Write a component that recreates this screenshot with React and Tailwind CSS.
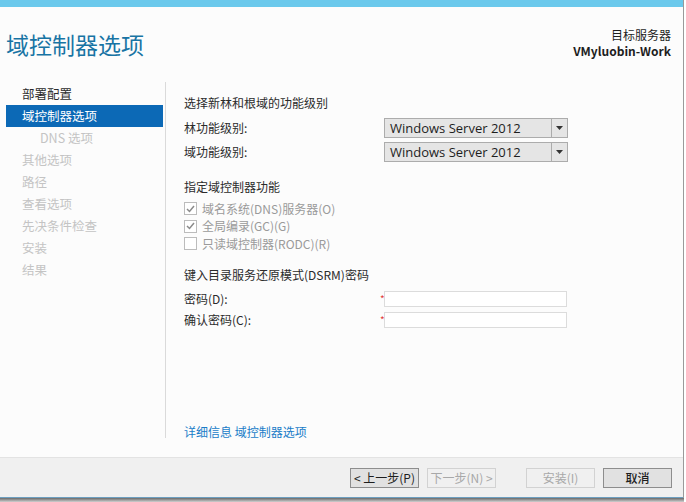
import React from 'react';

const font = { fontFamily: '"Noto Sans CJK SC", "Noto Sans", sans-serif' };

const navItems = [
  { label: '部署配置', state: 'done' },
  { label: '域控制器选项', state: 'active' },
  { label: 'DNS 选项', state: 'off', indent: true },
  { label: '其他选项', state: 'off' },
  { label: '路径', state: 'off' },
  { label: '查看选项', state: 'off' },
  { label: '先决条件检查', state: 'off' },
  { label: '安装', state: 'off' },
  { label: '结果', state: 'off' },
];

const Combo = ({ value }) => (
  <div className="flex h-[20px] w-[184px] border border-[#acacac] bg-[#e5e5e5]">
    <div className="flex-1 pl-[5px] text-[13px] leading-[18px] text-[#1e1e1e]" style={{ fontFamily: '"Open Sans", "Noto Sans", sans-serif' }}>
      {value}
    </div>
    <div className="flex w-[16px] items-center justify-center border-l border-[#acacac]">
      <svg width="7" height="4" viewBox="0 0 7 4"><path d="M0 0h7L3.5 4z" fill="#333" /></svg>
    </div>
  </div>
);

const Check = ({ checked, label }) => (
  <div className="flex h-[17.5px] items-center gap-[5px]">
    <div className="flex h-[13px] w-[13px] items-center justify-center border border-[#bcbcbc] bg-white">
      {checked && (
        <svg width="9" height="8" viewBox="0 0 9 8"><path d="M1 4l2.5 2.5L8 1" stroke="#8a8a8a" strokeWidth="1.5" fill="none" /></svg>
      )}
    </div>
    <span className="text-[12px] text-[#9a9a9a]">{label}</span>
  </div>
);

const PwRow = ({ label }) => (
  <div className="flex h-[19px] items-center">
    <span className="w-[196px] text-[12px] text-[#2b2b2b]">{label}</span>
    <span className="w-[4px] text-[10px] leading-none text-[#e23b3b]">*</span>
    <div className="h-[16px] w-[183px] border border-[#dcdcdc] bg-white" />
  </div>
);

const Btn = ({ children, disabled, bold }) => (
  <button
    className={`h-[20px] w-[69px] border text-[12px] leading-[18px] ${
      disabled ? 'border-[#d2d2d2] bg-[#f0f0f0] text-[#a8a8a8]' : 'border-[#8d8d8d] bg-[#e1e1e1] text-[#1e1e1e]'
    } ${bold ? 'font-medium' : ''}`}
  >
    {children}
  </button>
);

export default function App() {
  return (
    <div className="flex h-[502px] w-[686px] flex-col bg-white" style={font}>
      <div className="flex h-[498px] w-[684px] flex-col border-r border-[#9a9a9a]">
        <div className="h-[7px] bg-[#6bc9ec]" />
        <div className="flex h-[75px] justify-between bg-[#fcfcfc] pl-[6px] pr-[12px]">
          <h1 className="pt-[22px] text-[23px] leading-[30px] text-[#1874a4]">域控制器选项</h1>
          <div className="pt-[20px] text-right text-[12px] leading-[16px] text-[#1e1e1e]">
            <div>目标服务器</div>
            <div className="font-bold">VMyluobin-Work</div>
          </div>
        </div>

        <div className="flex flex-1 bg-[#fcfcfc]">
          <div className="mb-[19px] w-[166px] border-r border-[#dadada] pl-[6px] pt-[1px]">
            <div className="w-[157px]">
              {navItems.map((it) => (
                <div
                  key={it.label}
                  className={`flex h-[22px] items-center text-[12.5px] ${it.indent ? 'pl-[34px]' : 'pl-[16px]'} ${
                    it.state === 'active'
                      ? 'bg-[#0c69b6] text-white'
                      : it.state === 'done'
                      ? 'text-[#2b2b2b]'
                      : 'text-[#c4c4c4]'
                  }`}
                >
                  {it.label}
                </div>
              ))}
            </div>
          </div>

          <div className="flex flex-1 flex-col pl-[18px] pt-[12px] text-[12px] text-[#2b2b2b]">
            <div className="h-[16px]">选择新林和根域的功能级别</div>
            <div className="mt-[8px] flex items-center">
              <span className="w-[200px]">林功能级别:</span>
              <Combo value="Windows Server 2012" />
            </div>
            <div className="mt-[4px] flex items-center">
              <span className="w-[200px]">域功能级别:</span>
              <Combo value="Windows Server 2012" />
            </div>

            <div className="mt-[16px] h-[16px]">指定域控制器功能</div>
            <div className="mt-[6px]">
              <Check checked label="域名系统(DNS)服务器(O)" />
              <Check checked label="全局编录(GC)(G)" />
              <Check label="只读域控制器(RODC)(R)" />
            </div>

            <div className="mt-[13px] h-[16px]">键入目录服务还原模式(DSRM)密码</div>
            <div className="mt-[8px]">
              <PwRow label="密码(D):" />
              <div className="h-[2px]" />
              <PwRow label="确认密码(C):" />
            </div>

            <div className="mt-auto mb-[16px] text-[12px] text-[#1a7cc8]">详细信息 域控制器选项</div>
          </div>
        </div>

        <div className="flex h-[40px] items-center justify-end border-t border-[#e3e3e3] bg-[#f0f0f0] pr-[11px]">
          <div className="flex gap-[8px]">
            <Btn>&lt; 上一步(P)</Btn>
            <Btn disabled>下一步(N) &gt;</Btn>
          </div>
          <div className="ml-[30px] flex gap-[8px]">
            <Btn disabled>安装(I)</Btn>
            <Btn bold>取消</Btn>
          </div>
        </div>
        <div className="h-[1px] bg-[#6d9fc0]" />
      </div>
      <div className="h-[4px] w-[684px] bg-gradient-to-b from-[#6a6a6a] to-[#d0d0d0]" />
    </div>
  );
}
